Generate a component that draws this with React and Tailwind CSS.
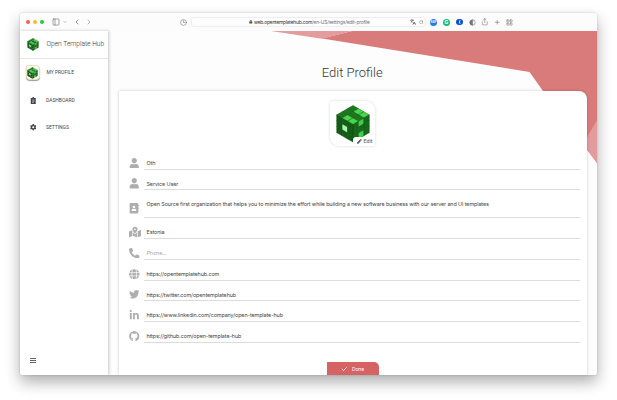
import React from "react";
import {
  FaUser, FaAddressBook, FaMapMarkedAlt, FaPhoneAlt, FaGlobe, FaTwitter,
  FaLinkedinIn, FaGithub, FaPen, FaCog, FaLock,
} from "react-icons/fa";
import { PanelLeft, Check, ChevronDown, ChevronLeft, ChevronRight, Share, Plus, LayoutGrid, RotateCw, Clock3, Languages } from "lucide-react";

const steps = [0, 1, 2];
const T = [33, 1];
const C = [33, 39];
const L = [0, 20];

function face(origin, u, v, a, b) {
  const p = (i, j) => `${origin[0] + u[0] * i + v[0] * j},${origin[1] + u[1] * i + v[1] * j}`;
  return [p(a, b), p(a + 1, b), p(a + 1, b + 1), p(a, b + 1)].join(" ");
}

function Cube({ className }) {
  const cells = [];
  steps.forEach((a) =>
    steps.forEach((b) => {
      cells.push([face(T, [11, 6.33], [-11, 6.33], a, b), a > 0 && b !== 1 ? "#45d84a" : "#1b7a1e"]);
      cells.push([face(L, [11, 6.33], [0, 12], a, b), a === 1 && b === 1 ? "#a5f5a8" : "#125c15"]);
      cells.push([face(C, [11, -6.33], [0, 12], a, b), a === 1 && b !== 1 ? "#3fd045" : "#17691a"]);
    })
  );
  return (
    <svg viewBox="-1 0 68 77" className={className}>
      {cells.map(([points, fill], i) => (
        <polygon key={i} points={points} fill={fill} stroke="#0b4a0e" strokeWidth="0.9" strokeLinejoin="round" />
      ))}
    </svg>
  );
}

function Toolbar() {
  return (
    <header className="flex h-[18px] shrink-0 items-center bg-[#fcfcfc] pl-[6.5px] text-[#777]">
      <div className="flex gap-[3px]">
        <i className="size-[4px] rounded-full bg-[#fb5a54]" />
        <i className="size-[4px] rounded-full bg-[#fdb827]" />
        <i className="size-[4px] rounded-full bg-[#28c840]" />
      </div>
      <PanelLeft className="ml-[8px] size-[8px]" strokeWidth={2} />
      <ChevronDown className="ml-[3px] size-[4px]" strokeWidth={3} />
      <ChevronLeft className="ml-[5.5px] size-[8px]" strokeWidth={2.5} />
      <ChevronRight className="ml-[4px] size-[8px] text-[#aaa]" strokeWidth={2.5} />
      <Clock3 className="ml-[87px] size-[7px]" strokeWidth={2} />
      <div className="ml-[4.5px] flex h-[10px] w-[235px] items-center rounded-[3px] border border-[#eee] bg-[#fdfdfd] pr-[2px] pl-[57px]">
        <FaLock className="mr-[1.5px] size-[3.5px] text-[#555]" />
        <span className="pt-px text-[4.9px] leading-none tracking-[-0.22px] whitespace-nowrap text-[#777]">
          <span className="text-[#333]">web.opentemplatehub.com</span>/en-US/settings/edit-profile
        </span>
        <Languages className="ml-auto size-[6px] text-[#666]" strokeWidth={2.8} />
        <RotateCw className="ml-[2.5px] size-[4.5px]" strokeWidth={2.5} />
      </div>
      <b className="ml-[4px] grid size-[7px] place-items-center rounded-full bg-[#2979ee] text-[2.8px] text-white">ABP</b>
      <b className="ml-[6px] grid size-[7px] place-items-center rounded-full bg-[#1abc72] text-[5px] leading-none text-white">G</b>
      <i className="ml-[6px] grid size-[6.5px] place-items-center rounded-full bg-[#0a4fd0] pl-px">
        <span className="h-[4px] w-[1.5px] rounded-l-full border-l border-white" />
      </i>
      <svg viewBox="0 0 24 24" className="ml-[6px] size-[7px]" fill="none" stroke="currentColor" strokeWidth="2.2">
        <circle cx="12" cy="12" r="9" />
        <path d="M12 3a9 9 0 0 0 0 18Z" fill="currentColor" />
      </svg>
      <Share className="ml-[5.5px] size-[7.5px]" strokeWidth={1.8} />
      <Plus className="ml-[5.5px] size-[6.5px]" strokeWidth={2.3} />
      <LayoutGrid className="ml-[5.5px] size-[7px]" strokeWidth={2} />
    </header>
  );
}

function Clipboard({ className }) {
  return (
    <svg viewBox="0 0 12 14" className={className}>
      <path d="M1 2H4a2 2 0 0 1 4 0H11V14H1Z" fill="currentColor" />
      <path d="M3.5 6H8.5M3.5 8.5H8.5M3.5 11H7" stroke="white" strokeWidth="0.9" />
    </svg>
  );
}

function Sidebar() {
  return (
    <aside className="relative flex w-[88px] shrink-0 flex-col bg-white font-['Roboto',sans-serif] text-[4.95px] text-[#444] shadow-[1px_0_3px_rgba(0,0,0,0.22)]">
      <div className="flex h-[28px] shrink-0 items-center border-b border-[#e6e6e6] pl-[7px]">
        <Cube className="h-[13px] w-[12px]" />
        <span className="ml-[8px] pt-px text-[6.65px] font-light whitespace-nowrap text-[#333]">Open Template Hub</span>
      </div>
      <div className="mt-[6px] flex h-[15px] items-center pl-[6px]">
        <span className="grid size-[14.5px] place-items-center rounded-[4px] rounded-tl-none border border-[#eee0b5] bg-white shadow-[0_1px_1px_rgba(0,0,0,0.4)]">
          <Cube className="h-[12px] w-[11px]" />
        </span>
        <span className="ml-[6.5px] pt-px">MY PROFILE</span>
      </div>
      <div className="mt-[15.5px] flex h-[10px] items-center pl-[10px]">
        <Clipboard className="h-[7px] w-[6.5px]" />
        <span className="ml-[10px] pt-px">DASHBOARD</span>
      </div>
      <div className="mt-[17px] flex h-[10px] items-center pl-[10px]">
        <FaCog className="size-[6.5px]" />
        <span className="ml-[10px] pt-px">SETTINGS</span>
      </div>
      <div className="mt-auto mb-[11.5px] ml-[10.5px] flex w-[5.5px] flex-col gap-px">
        <i className="h-px bg-[#666]" />
        <i className="h-px bg-[#666]" />
        <i className="h-px bg-[#666]" />
      </div>
    </aside>
  );
}

const fields = [
  { Icon: FaUser, text: "Oth" },
  { Icon: FaUser, text: "Service User" },
  { Icon: FaAddressBook, text: "Open Source first organization that helps you to minimize the effort while building a new software business with our server and UI templates", tall: true },
  { Icon: FaMapMarkedAlt, text: "Estonia" },
  { Icon: FaPhoneAlt, text: "Phone...", empty: true },
  { Icon: FaGlobe, text: "https://opentemplatehub.com" },
  { Icon: FaTwitter, text: "https://twitter.com/opentemplatehub" },
  { Icon: FaLinkedinIn, text: "https://www.linkedin.com/company/open-template-hub" },
  { Icon: FaGithub, text: "https://github.com/open-template-hub" },
];

function Globe({ className }) {
  return (
    <svg viewBox="0 0 24 24" className={className} fill="none">
      <circle cx="12" cy="12" r="12" fill="currentColor" />
      <path d="M0 8.3H24M0 15.7H24M8.5 0C6 7 6 17 8.5 24M15.5 0C18 7 18 17 15.5 24" stroke="white" strokeWidth="1.6" />
    </svg>
  );
}

function Field({ Icon, text, tall, empty }) {
  const Glyph = Icon === FaGlobe ? Globe : Icon;
  return (
    <div className={tall ? "flex h-[28.1px] pt-[8px]" : "flex h-[20.7px] pt-[8px]"}>
      <span className={tall ? "flex h-[20px] w-[13px] items-center justify-center text-[#aeaeae]" : "flex h-[12px] w-[13px] items-center justify-center text-[#aeaeae]"}>
        <Glyph className={Icon === FaMapMarkedAlt ? "size-[12px]" : "size-[10.5px]"} />
      </span>
      <div className={`ml-[2.5px] flex-1 border-b border-[#dcdcdc] pt-[3px] pl-[3px] text-[5.4px] leading-[7px] tracking-[-0.1px] whitespace-nowrap ${empty ? "text-[#aaa]" : "text-[#444]"}`}>
        {text}
      </div>
    </div>
  );
}

export default function App() {
  return (
    <div className="flex h-[400px] w-[617px] overflow-hidden bg-white pt-[13px] pl-[19.5px] font-['Inter',sans-serif]">
      <div className="h-[361.5px] w-[577.5px] rounded-[3px] shadow-[0_7px_15px_rgba(0,0,0,0.32),0_0_2px_rgba(0,0,0,0.22)]">
        <div className="flex h-full flex-col overflow-hidden rounded-[3px]">
          <Toolbar />
          <div className="flex min-h-0 flex-1 bg-[#fdfdfd]">
            <Sidebar />
            <main className="relative flex min-w-0 flex-1 flex-col">
              <svg className="absolute top-0 right-0 h-[133px] w-[326px]" viewBox="271 31 326 133">
                <path d="M322 38.5 352 31H597V163L543 91 529.5 72Z" fill="#d97b7b" />
                <path d="M271 31H352L322 38.8ZM597 120V163L583 144.5Z" fill="#e39b9b" />
              </svg>
              <h1 className="relative mt-[33px] h-[27px] text-center font-['Roboto',sans-serif] text-[13px] leading-[18px] font-light text-[#333]">Edit Profile</h1>
              <section className="relative mr-[10px] ml-[11px] flex min-h-0 flex-1 flex-col items-center rounded-tr-[8px] bg-white pt-[10px] pr-[7px] pl-[9.5px] shadow-[0_0_3px_rgba(0,0,0,0.22)]">
                <div className="relative mr-[2.5px] flex h-[45px] w-[45px] shrink-0 justify-center rounded-[9px] rounded-tl-[3px] rounded-br-none bg-white pt-[4px] shadow-[0_0_3px_rgba(0,0,0,0.16)]">
                  <Cube className="h-[38px] w-[34px]" />
                  <span className="absolute right-0 bottom-0 flex h-[9px] w-[22.5px] items-center rounded-tl-[3px] rounded-tr-[3px] bg-white pl-[4px] font-['Roboto',sans-serif] text-[5.3px] text-[#555]">
                    <FaPen className="mr-[2px] size-[4.8px]" />Edit
                  </span>
                </div>
                <div className="mt-[3px] w-full shrink-0">
                  {fields.map((f, i) => <Field key={i} {...f} />)}
                </div>
                <button className="mt-[19.5px] mr-[2.5px] flex h-[15px] w-[51.5px] shrink-0 items-center justify-center rounded-tr-[5px] bg-[#d66363] text-[5px] tracking-[-0.1px] text-white">
                  <Check className="mr-[4px] size-[6.5px]" strokeWidth={3} />Done
                </button>
              </section>
            </main>
          </div>
        </div>
      </div>
    </div>
  );
}
